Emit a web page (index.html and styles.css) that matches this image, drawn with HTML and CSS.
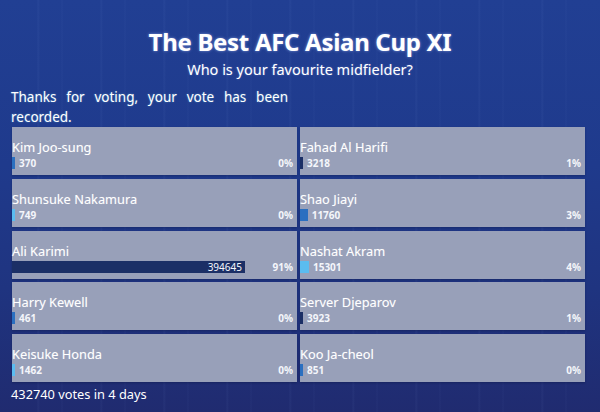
FILE: index.html
```html
<!DOCTYPE html>
<html>
<head>
<meta charset="utf-8">
<link rel="stylesheet" href="styles.css">
</head>
<body>
<div class="page">
  <h1 class="title">The Best AFC Asian Cup XI</h1>
  <p class="subtitle">Who is your favourite midfielder?</p>
  <p class="thanks">Thanks for voting, your vote has been recorded.</p>
  <div class="grid">
    <div class="cell"><div class="name">Kim Joo-sung</div><div class="row"><div class="track"><span class="bar c2" style="width:1%"></span><span class="num">370</span></div><span class="pct">0%</span></div></div>
    <div class="cell"><div class="name">Fahad Al Harifi</div><div class="row"><div class="track"><span class="bar c1" style="width:1%"></span><span class="num">3218</span></div><span class="pct">1%</span></div></div>
    <div class="cell"><div class="name">Shunsuke Nakamura</div><div class="row"><div class="track"><span class="bar c3" style="width:1%"></span><span class="num">749</span></div><span class="pct">0%</span></div></div>
    <div class="cell"><div class="name">Shao Jiayi</div><div class="row"><div class="track"><span class="bar c2" style="width:3%"></span><span class="num">11760</span></div><span class="pct">3%</span></div></div>
    <div class="cell"><div class="name">Ali Karimi</div><div class="row"><div class="track"><span class="bar c1 inside" style="width:91%"><span class="num">394645</span></span></div><span class="pct">91%</span></div></div>
    <div class="cell"><div class="name">Nashat Akram</div><div class="row"><div class="track"><span class="bar c3" style="width:3.5%"></span><span class="num">15301</span></div><span class="pct">4%</span></div></div>
    <div class="cell"><div class="name">Harry Kewell</div><div class="row"><div class="track"><span class="bar c2" style="width:1%"></span><span class="num">461</span></div><span class="pct">0%</span></div></div>
    <div class="cell"><div class="name">Server Djeparov</div><div class="row"><div class="track"><span class="bar c1" style="width:1%"></span><span class="num">3923</span></div><span class="pct">1%</span></div></div>
    <div class="cell"><div class="name">Keisuke Honda</div><div class="row"><div class="track"><span class="bar c3" style="width:1%"></span><span class="num">1462</span></div><span class="pct">0%</span></div></div>
    <div class="cell"><div class="name">Koo Ja-cheol</div><div class="row"><div class="track"><span class="bar c2" style="width:1%"></span><span class="num">851</span></div><span class="pct">0%</span></div></div>
  </div>
  <p class="footer">432740 votes in 4 days</p>
</div>
</body>
</html>
```
FILE: styles.css
```css
html, body {
  margin: 0;
  padding: 0;
}
body {
  width: 600px;
  height: 412px;
  overflow: hidden;
  font-family: "Noto Sans", "Open Sans", sans-serif;
  color: #ffffff;
  background:
    repeating-linear-gradient(90deg, rgba(255,255,255,0) 0px, rgba(255,255,255,0) 37px, rgba(160,190,255,0.05) 38px, rgba(255,255,255,0) 40px, rgba(255,255,255,0) 61px, rgba(160,190,255,0.04) 62px, rgba(255,255,255,0) 63px),
    linear-gradient(180deg, #213f93 0%, #1f3a8c 40%, #1f3480 70%, #202b70 100%);
}
.page {
  padding: 0 12px 0 12px;
}
.title {
  margin: 0;
  padding-top: 26px;
  text-align: center;
  font-size: 24px;
  line-height: 32px;
  font-weight: 700;
  letter-spacing: -0.3px;
  text-shadow: 0 0 3px rgba(180,200,255,0.6);
}
.subtitle {
  margin: 0;
  text-align: center;
  font-size: 14.5px;
  line-height: 22px;
  text-shadow: 0 0 2px rgba(180,200,255,0.4);
}
.thanks {
  margin: 8px 0 0 -1px;
  width: 277px;
  text-align: justify;
  font-size: 13.5px;
  line-height: 19.5px;
  text-shadow: 0 0 2px rgba(150,255,255,0.4);
}
.grid {
  margin-top: 0;
  width: 573px;
  display: grid;
  grid-template-columns: 285px 285px;
  column-gap: 3px;
  row-gap: 3.75px;
}
.cell {
  height: 48px;
  box-sizing: border-box;
  background: #98a0b9;
  padding: 12px 4px 0 0;
  box-shadow: 0 1px 2px rgba(10,20,60,0.35);
}
.name {
  font-size: 12.8px;
  line-height: 16px;
  white-space: nowrap;
  text-shadow: 0 0 1px rgba(255,255,255,0.3);
}
.row {
  margin-top: 2px;
  display: flex;
  align-items: center;
  height: 12px;
}
.track {
  flex: 0 0 256px;
  display: flex;
  align-items: center;
  height: 12px;
}
.bar {
  display: block;
  height: 12px;
  min-width: 3px;
}
.bar.inside {
  display: flex;
  justify-content: flex-end;
  align-items: center;
}
.c1 { background: #1b2f66; }
.c2 { background: #2a6fc0; }
.c3 { background: #5bbcf0; }
.num {
  margin-left: 4px;
  font-size: 10px;
  font-weight: 700;
  line-height: 12px;
  color: #f4f6fb;
}
.bar.inside .num {
  margin-left: 0;
  margin-right: 3px;
  font-weight: 400;
}
.pct {
  margin-left: auto;
  font-size: 10px;
  font-weight: 700;
  color: #f4f6fb;
}
.footer {
  margin: 4px 0 0 -1px;
  font-size: 12.8px;
  line-height: 16px;
}
```
